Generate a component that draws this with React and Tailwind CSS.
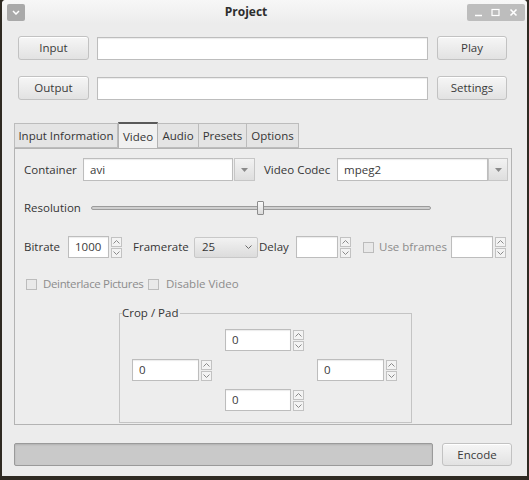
const Btn = ({ children, className = '' }) => (
  <div
    className={`flex items-center justify-center rounded-[3px] border border-[#c2c2c2] bg-gradient-to-b from-[#f6f6f6] to-[#e2e2e2] text-[#3a3a3a] shadow-[inset_0_1px_0_#ffffff] ${className}`}
  >
    {children}
  </div>
);

const Field = ({ value = '', className = '' }) => (
  <div
    className={`flex items-center border border-[#bdbdbd] bg-white pl-[6px] text-[#3a3a3a] shadow-[inset_0_1px_1px_rgba(0,0,0,0.08)] ${className}`}
  >
    {value}
  </div>
);

const Arrows = () => (
  <div className="ml-[2px] flex w-[11px] flex-col gap-[1px]">
    <div className="flex h-[10px] items-center justify-center border border-[#c2c2c2] bg-[#f3f3f3]">
      <svg width="7" height="4" viewBox="0 0 7 4">
        <path d="M0.5 3.5 L3.5 0.5 L6.5 3.5" fill="none" stroke="#8a8a8a" strokeWidth="1" />
      </svg>
    </div>
    <div className="flex h-[10px] items-center justify-center border border-[#c2c2c2] bg-[#f3f3f3]">
      <svg width="7" height="4" viewBox="0 0 7 4">
        <path d="M0.5 0.5 L3.5 3.5 L6.5 0.5" fill="none" stroke="#8a8a8a" strokeWidth="1" />
      </svg>
    </div>
  </div>
);

const Spin = ({ value = '', width }) => (
  <div className="flex items-center">
    <Field value={value} className={`h-[22px] ${width}`} />
    <Arrows />
  </div>
);

const DropBtn = ({ className = '' }) => (
  <div
    className={`flex h-[23px] items-center justify-center border border-[#c6c6c6] bg-gradient-to-b from-[#f2f2f2] to-[#dedede] ${className}`}
  >
    <svg width="7" height="4" viewBox="0 0 7 4">
      <path d="M0 0 L7 0 L3.5 4 Z" fill="#8a8a8a" />
    </svg>
  </div>
);

const Check = () => (
  <div className="h-[11px] w-[11px] shrink-0 border border-[#bcbcbc] bg-[#e9e9e9]" />
);

const tabs = ['Input Information', 'Video', 'Audio', 'Presets', 'Options'];
const tabWidths = ['w-[104px]', 'w-[40px]', 'w-[41px]', 'w-[48px]', 'w-[52px]'];

export default function App() {
  return (
    <div
      className="flex h-[480px] w-[529px] whitespace-nowrap bg-[#2f2a22] text-[11.5px] text-[#353535]"
      style={{ fontFamily: '"Open Sans", "DejaVu Sans", sans-serif' }}
    >
      <div className="ml-[2px] flex h-[476px] w-[525px] flex-col rounded-t-[4px] bg-[#ececec]">
        {/* title bar */}
        <div className="flex h-[24px] items-center rounded-t-[4px] bg-gradient-to-b from-[#f7f7f7] to-[#ececec] pl-[5px] pr-[2px]">
          <div className="flex h-[17px] w-[18px] items-center justify-center rounded-[2px] bg-[#a9a9a9]">
            <svg width="8" height="5" viewBox="0 0 8 5">
              <path d="M1 1 L4 4 L7 1" fill="none" stroke="#ffffff" strokeWidth="1.5" />
            </svg>
          </div>
          <div className="flex-1 text-center text-[12px] font-bold text-[#2e2e2e]">Project</div>
          <div className="flex h-[17px] w-[58px] items-center justify-around rounded-[2px] bg-[#bdbdbd] px-[3px]">
            <svg width="9" height="9" viewBox="0 0 9 9">
              <path d="M1 7.5 L8 7.5" stroke="#ffffff" strokeWidth="1.5" />
            </svg>
            <svg width="9" height="9" viewBox="0 0 9 9">
              <rect x="1" y="1.5" width="7" height="6" fill="none" stroke="#ffffff" strokeWidth="1.2" />
            </svg>
            <svg width="9" height="9" viewBox="0 0 9 9">
              <path d="M1.5 1.5 L7.5 7.5 M7.5 1.5 L1.5 7.5" stroke="#ffffff" strokeWidth="1.6" />
            </svg>
          </div>
        </div>

        {/* input row */}
        <div className="mt-[12px] flex h-[24px] items-center pl-[16px]">
          <Btn className="h-[24px] w-[71px]">Input</Btn>
          <Field className="ml-[8px] h-[23px] w-[331px]" />
          <Btn className="ml-[9px] h-[24px] w-[70px]">Play</Btn>
        </div>

        {/* output row */}
        <div className="mt-[16px] flex h-[24px] items-center pl-[16px]">
          <Btn className="h-[24px] w-[71px]">Output</Btn>
          <Field className="ml-[8px] h-[23px] w-[331px]" />
          <Btn className="ml-[9px] h-[24px] w-[70px]">Settings</Btn>
        </div>

        {/* tabs */}
        <div className="mt-[22px] flex h-[26px] items-end pl-[12px]">
          {tabs.map((t, i) =>
            t === 'Video' ? (
              <div
                key={t}
                className={`-mb-[1px] flex h-[27px] items-center justify-center border border-b-0 border-[#b3b3b3] border-t-[2px] border-t-[#5a5a5a] bg-[#f1f1f1] ${tabWidths[i]}`}
              >
                {t}
              </div>
            ) : (
              <div
                key={t}
                className={`flex h-[25px] items-center justify-center border border-l-0 border-[#bcbcbc] bg-[#e4e4e4] first:border-l ${tabWidths[i]}`}
              >
                {t}
              </div>
            )
          )}
        </div>

        {/* panel */}
        <div className="ml-[12px] flex h-[277px] w-[498px] flex-col border border-[#b3b3b3] bg-[#ededed] pl-[9px] pt-[9px]">
          {/* container / codec */}
          <div className="flex h-[23px] items-center">
            <div className="w-[59px]">Container</div>
            <Field value="avi" className="h-[23px] w-[150px]" />
            <DropBtn className="ml-[1px] w-[21px]" />
            <div className="ml-[9px] w-[73px]">Video Codec</div>
            <Field value="mpeg2" className="h-[23px] w-[151px]" />
            <DropBtn className="w-[20px]" />
          </div>

          {/* resolution */}
          <div className="mt-[20px] flex h-[14px] items-center">
            <div className="w-[67px]">Resolution</div>
            <div className="relative h-[4px] w-[340px] rounded-[2px] border border-[#9c9c9c] bg-[#cfcfcf]">
              <div className="absolute left-[165px] top-[-6px] h-[14px] w-[7px] rounded-[1px] border border-[#8c8c8c] bg-gradient-to-b from-[#fafafa] to-[#dcdcdc]" />
            </div>
          </div>

          {/* bitrate row */}
          <div className="mt-[21px] flex h-[22px] items-center">
            <div className="w-[44px]">Bitrate</div>
            <Spin value="1000" width="w-[41px]" />
            <div className="ml-[11px] w-[61px]">Framerate</div>
            <div className="flex h-[21px] w-[64px] items-center justify-between rounded-[2px] border border-[#c8c8c8] bg-gradient-to-b from-[#f2f2f2] to-[#dcdcdc] pl-[7px] pr-[5px]">
              <span>25</span>
              <svg width="7" height="4" viewBox="0 0 7 4">
                <path d="M0.5 0.5 L3.5 3.5 L6.5 0.5" fill="none" stroke="#6a6a6a" strokeWidth="1" />
              </svg>
            </div>
            <div className="ml-[1px] w-[37px]">Delay</div>
            <Spin width="w-[42px]" />
            <div className="ml-[12px] flex items-center">
              <Check />
            </div>
            <div className="ml-[5px] w-[72px] text-[#8c8c8c]">Use bframes</div>
            <Spin width="w-[42px]" />
          </div>

          {/* checkboxes */}
          <div className="mt-[18px] flex h-[16px] items-center pl-[2px] text-[#8c8c8c]">
            <Check />
            <div className="ml-[6px] w-[105px] tracking-[-0.35px]">Deinterlace Pictures</div>
            <Check />
            <div className="ml-[7px]">Disable Video</div>
          </div>

          {/* crop / pad */}
          <div className="relative ml-[95px] mt-[21px] flex h-[110px] w-[293px] flex-col border border-[#c4c4c4] pt-[15px]">
            <div className="absolute left-[2px] top-[-9px] bg-[#ededed] pr-[2px] leading-[16px] text-[#353535]">
              Crop / Pad
            </div>
            <div className="ml-[105px]">
              <Spin value="0" width="w-[66px]" />
            </div>
            <div className="mt-[8px] flex">
              <div className="ml-[12px]">
                <Spin value="0" width="w-[67px]" />
              </div>
              <div className="ml-[105px]">
                <Spin value="0" width="w-[67px]" />
              </div>
            </div>
            <div className="ml-[105px] mt-[8px]">
              <Spin value="0" width="w-[66px]" />
            </div>
          </div>
        </div>

        {/* bottom row */}
        <div className="mt-[18px] flex h-[23px] items-center pl-[12px]">
          <div className="h-[23px] w-[419px] rounded-[2px] border border-[#9a9a9a] bg-[#c9c9c9] shadow-[inset_0_1px_2px_rgba(0,0,0,0.12)]" />
          <Btn className="ml-[9px] h-[23px] w-[70px]">Encode</Btn>
        </div>
      </div>
    </div>
  );
}
